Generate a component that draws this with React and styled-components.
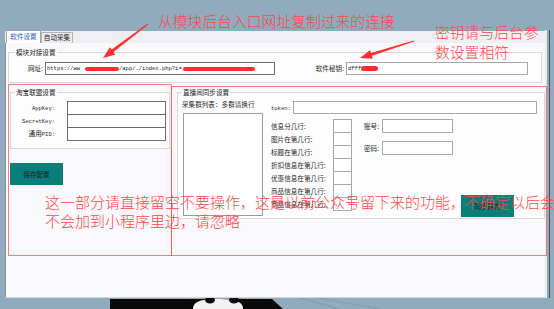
import React from 'react';
import styled, { createGlobalStyle } from 'styled-components';

const CJK = `"Noto Sans CJK SC", "Noto Sans", sans-serif`;
const MONO = `"Liberation Mono", "DejaVu Sans Mono", monospace`;
const NOTE_RED = '#ff4646';

const GlobalStyle = createGlobalStyle`
  html, body { margin: 0; padding: 0; }
  body {
    width: 554px; height: 309px; overflow: hidden;
    background: #8fabbd;
    font-family: ${CJK};
  }
`;

const Desktop = styled.div`
  position: relative;
  width: 554px;
  height: 309px;
  overflow: hidden;
  background: #8fabbd;
  display: flex;
  flex-direction: column;
`;

const TopCaption = styled.div`
  height: 30px;
  box-sizing: border-box;
  padding: 12px 0 0 158px;
  font: 300 14.8px/17px ${CJK};
  color: ${NOTE_RED};
  white-space: nowrap;
`;

const Window = styled.div`
  margin-left: 5px;
  width: 540px;
  height: 268px;
  display: flex;
  flex-direction: column;
  border-right: 2px solid #e4ecf1;
  box-shadow: 2px 0 0 #8fabbd, 3px 0 0 #45535f;
`;

const TabStrip = styled.div`
  height: 13px;
  display: flex;
  align-items: flex-end;
  background: linear-gradient(to bottom, transparent 1px, #efeff1 1px);
  padding-left: 1px;
`;

const Tab = styled.div`
  box-sizing: border-box;
  width: ${p => p.$w}px;
  height: ${p => (p.$active ? 13 : 11)}px;
  border: 1px solid ${p => (p.$active ? '#a3a3a3' : '#b4b4b4')};
  border-bottom: none;
  background: ${p => (p.$active ? '#ffffff' : '#ececee')};
  color: ${p => (p.$active ? '#2760cc' : '#202020')};
  font: 400 6.6px/${p => (p.$active ? 11 : 9)}px ${CJK};
  text-align: center;
  white-space: nowrap;
`;

const Panel = styled.div`
  flex: 1;
  box-sizing: border-box;
  background: #f9f9fb;
  border-left: 1px solid #8e8e8e;
  border-bottom: 1px solid #d3d6da;
  display: flex;
  flex-direction: column;
  align-items: flex-start;
`;

const Group = styled.fieldset`
  box-sizing: border-box;
  margin: ${p => p.$mt || 0}px 0 0 ${p => p.$ml || 0}px;
  padding: 0;
  min-width: 0;
  width: ${p => p.$w}px;
  height: ${p => p.$h}px;
  border: 1px solid #d9d9dc;
  background: #fdfdfd;
`;

const Legend = styled.legend`
  margin-left: ${p => p.$ml}px;
  padding: 0 1px;
  font: 400 6.6px/8px ${CJK};
  color: #222;
  white-space: nowrap;
`;

const LinkRow = styled.div`
  display: flex;
  align-items: center;
  margin-top: 6px;
`;

const Label = styled.div`
  box-sizing: border-box;
  width: ${p => p.$w}px;
  margin-right: ${p => p.$gap ?? 2}px;
  text-align: ${p => p.$align || 'right'};
  font: 400 6.6px/9px ${CJK};
  color: #1e1e1e;
  white-space: nowrap;
  flex: none;
`;

const Latin = styled.span`
  font: 400 5.5px/9px ${MONO};
`;

const Field = styled.div`
  box-sizing: border-box;
  width: ${p => p.$w}px;
  height: ${p => p.$h || 13}px;
  border: 1px solid ${p => (p.$dark ? '#6c6c6c' : '#a8a8a8')};
  background: #ffffff;
  padding-left: 1px;
  display: flex;
  align-items: center;
  overflow: hidden;
  white-space: nowrap;
  font: 400 5.5px/9px ${MONO};
  color: #141414;
  flex: none;
`;

const Scribble = styled.span`
  display: inline-block;
  flex: none;
  width: ${p => p.$w}px;
  height: ${p => p.$h || 4}px;
  margin: 0 ${p => p.$mr || 0}px 0 ${p => p.$ml || 0}px;
  background: #ff2e2e;
  border-radius: 3px;
`;

const Columns = styled.div`
  display: flex;
  align-items: flex-start;
  margin: 1px 0 0 2px;
`;

const MarkBox = styled.div`
  box-sizing: border-box;
  width: ${p => p.$w}px;
  height: ${p => p.$h}px;
  margin: ${p => p.$mt || 0}px 0 0 ${p => p.$ml || 0}px;
  border: 1px solid rgba(255, 80, 80, 0.75);
  display: flex;
  flex-direction: column;
  align-items: flex-start;
  flex: none;
`;

const FormRow = styled.div`
  display: flex;
  align-items: center;
  & + & { margin-top: -1px; }
`;

const Form = styled.div`
  margin-top: 5px;
  display: flex;
  flex-direction: column;
`;

const ActionButton = styled.div`
  box-sizing: border-box;
  width: 53px;
  height: 22px;
  margin: ${p => p.$mt}px 0 0 ${p => p.$ml}px;
  background: #0a7e7b;
  color: #161e1e;
  font: 400 6.6px/22px ${CJK};
  text-align: center;
  flex: none;
`;

const LiveBody = styled.div`
  display: flex;
  padding-left: 4px;
`;

const ListPane = styled.div`
  width: 80px;
  display: flex;
  flex-direction: column;
  flex: none;
`;

const Caption = styled.div`
  margin-top: 4px;
  font: 400 6.6px/8px ${CJK};
  color: #1e1e1e;
  white-space: nowrap;
`;

const ListBox = styled.div`
  box-sizing: border-box;
  width: 80px;
  height: 103px;
  margin: 5px 0 0 1px;
  border: 1px solid #9c9c9c;
  background: #ffffff;
`;

const SettingsPane = styled.div`
  margin-left: 9px;
  padding-top: 5px;
  display: flex;
  flex-direction: column;
`;

const Lower = styled.div`
  display: flex;
  align-items: flex-start;
  margin-top: 5px;
`;

const LineList = styled.div`
  display: flex;
  flex-direction: column;
`;

const AccountCol = styled.div`
  margin-left: 6px;
  display: flex;
  flex-direction: column;
  align-items: flex-start;
`;

const AccountRow = styled.div`
  display: flex;
  align-items: center;
  & + & { margin-top: 8px; }
`;

const BottomStrip = styled.div`
  height: 11px;
  display: flex;
`;

const Note = styled.div`
  position: absolute;
  left: ${p => p.$x}px;
  top: ${p => p.$y}px;
  font: 300 ${p => p.$size}px/${p => p.$lh}px ${CJK};
  color: ${NOTE_RED};
  white-space: nowrap;
  pointer-events: none;
`;

const ArrowLayer = styled.svg`
  position: absolute;
  left: 0;
  top: 0;
  pointer-events: none;
`;

function arrowPoints(x1, y1, x2, y2, tailW, shaftW, headL, headW) {
  const dx = x2 - x1;
  const dy = y2 - y1;
  const len = Math.hypot(dx, dy);
  const ux = dx / len;
  const uy = dy / len;
  const nx = -uy;
  const ny = ux;
  const bx = x2 - ux * headL;
  const by = y2 - uy * headL;
  const pts = [
    [x1 + (nx * tailW) / 2, y1 + (ny * tailW) / 2],
    [bx + (nx * shaftW) / 2, by + (ny * shaftW) / 2],
    [bx + (nx * headW) / 2, by + (ny * headW) / 2],
    [x2, y2],
    [bx - (nx * headW) / 2, by - (ny * headW) / 2],
    [bx - (nx * shaftW) / 2, by - (ny * shaftW) / 2],
    [x1 - (nx * tailW) / 2, y1 - (ny * tailW) / 2],
  ];
  return pts.map(p => p.map(v => v.toFixed(1)).join(',')).join(' ');
}

const lineLabels = [
  '信息分几行:',
  '图片在第几行:',
  '标题在第几行:',
  '折扣信息在第几行:',
  '优惠信息在第几行:',
  '商品信息在第几行:',
  '商品信息在第几行:',
];

export default function App() {
  return (
    <>
      <GlobalStyle />
      <Desktop>
        <TopCaption>从模块后台入口网址复制过来的连接</TopCaption>
        <Window>
          <TabStrip>
            <Tab $active $w={35}>软件设置</Tab>
            <Tab $w={32}>自动采集</Tab>
          </TabStrip>
          <Panel>
            <Group $w={534} $h={35} $mt={5} $ml={2}>
              <Legend $ml={6}>模块对接设置</Legend>
              <LinkRow>
                <Label $w={34}>网址:</Label>
                <Field $w={230} $dark>
                  https://ww
                  <Scribble $w={34} $h={4} $ml={5} />
                  /app/./index.php?i=
                  <Scribble $w={72} $h={4} $ml={1} />
                </Field>
                <Label $w={69}>软件秘钥:</Label>
                <Field $w={182}>
                  dfff
                  <Scribble $w={17} $h={5} />
                </Field>
              </LinkRow>
            </Group>
            <Columns>
              <MarkBox $w={164} $h={172}>
                <Group $w={160} $h={61} $mt={3} $ml={1}>
                  <Legend $ml={4}>淘宝联盟设置</Legend>
                  <Form>
                    <FormRow>
                      <Label $w={44} $gap={12}><Latin>AppKey:</Latin></Label>
                      <Field $w={99} $h={14} $dark />
                    </FormRow>
                    <FormRow>
                      <Label $w={44} $gap={12}><Latin>SecretKey:</Latin></Label>
                      <Field $w={99} $h={14} $dark />
                    </FormRow>
                    <FormRow>
                      <Label $w={44} $gap={12}>通用<Latin>PID:</Latin></Label>
                      <Field $w={99} $h={14} $dark />
                    </FormRow>
                  </Form>
                </Group>
                <ActionButton $mt={14} $ml={1}>保存配置</ActionButton>
              </MarkBox>
              <MarkBox $w={376} $h={170} $mt={2} $ml={-1}>
                <Group $w={368} $h={131} $mt={1} $ml={5}>
                  <Legend $ml={4}>直播间同步设置</Legend>
                  <LiveBody>
                    <ListPane>
                      <Caption>采集群列表：多群请换行</Caption>
                      <ListBox />
                    </ListPane>
                    <SettingsPane>
                      <FormRow>
                        <Label $w={22} $gap={0} $align="left"><Latin>token:</Latin></Label>
                        <Field $w={244} $h={13} />
                      </FormRow>
                      <Lower>
                        <LineList>
                          {lineLabels.map((t, i) => (
                            <FormRow key={i}>
                              <Label $w={62} $gap={0} $align="left">{t}</Label>
                              <Field $w={19} $h={14} />
                            </FormRow>
                          ))}
                        </LineList>
                        <AccountCol>
                          <AccountRow>
                            <Label $w={21} $gap={3}>账号:</Label>
                            <Field $w={71} $h={14} />
                          </AccountRow>
                          <AccountRow>
                            <Label $w={21} $gap={3}>密码:</Label>
                            <Field $w={71} $h={14} />
                          </AccountRow>
                          <ActionButton $mt={40} $ml={103}>同步确定</ActionButton>
                        </AccountCol>
                      </Lower>
                    </SettingsPane>
                  </LiveBody>
                </Group>
              </MarkBox>
            </Columns>
          </Panel>
        </Window>
        <BottomStrip>
          <svg width="554" height="11" viewBox="0 0 554 11">
            <line x1="300" y1="0" x2="340" y2="11" stroke="#7d96a6" strokeWidth="0.7" />
            <line x1="318" y1="0" x2="380" y2="11" stroke="#7d96a6" strokeWidth="0.7" />
            <polygon points="110,1 272,1 283,11 110,11" fill="#0a0a0b" />
            <path d="M193 11 C193 4 200 1 218 1 C236 1 243 4 243 11 Z" fill="#f2f2f2" />
            <ellipse cx="210" cy="2" rx="5" ry="3.5" fill="#0a0a0b" />
            <ellipse cx="234" cy="2" rx="5" ry="3.5" fill="#0a0a0b" />
          </svg>
        </BottomStrip>

        <Note $x={435} $y={22} $size={14.8} $lh={20}>
          密钥请与后台参
          <br />
          数设置相符
        </Note>
        <Note $x={45} $y={192} $size={15} $lh={19}>
          这一部分请直接留空不要操作，这是以前公众号留下来的功能，不确定以后会
          <br />
          不会加到小程序里边，请忽略
        </Note>
        <ArrowLayer width="554" height="309" viewBox="0 0 554 309">
          <polygon points={arrowPoints(148, 24, 103, 58, 1, 3, 12, 9)} fill="#ff2f2f" />
          <polygon points={arrowPoints(414, 41, 360, 58, 1, 3, 12, 9)} fill="#ff2f2f" />
        </ArrowLayer>
      </Desktop>
    </>
  );
}
